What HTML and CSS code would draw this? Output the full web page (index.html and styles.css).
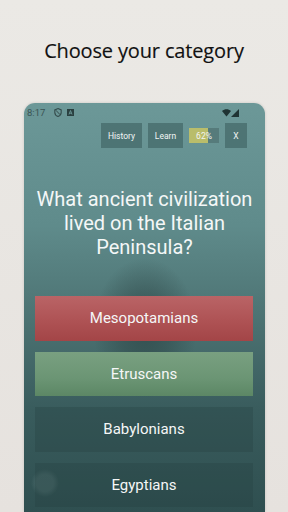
FILE: index.html
```html
<!DOCTYPE html>
<html>
<head>
<meta charset="utf-8">
<link rel="stylesheet" href="styles.css">
</head>
<body>
<div class="page">
  <header class="header">
    <h1 class="title">Choose your category</h1>
  </header>
  <main class="phone">
    <div class="status">
      <div class="status-left">
        <span class="time">8:17</span>
        <svg class="ico" width="8" height="9" viewBox="0 0 8 9"><path d="M4 0.6 L7.2 1.9 V4.4 C7.2 6.3 5.7 7.7 4 8.4 C2.3 7.7 0.8 6.3 0.8 4.4 V1.9 Z" fill="none" stroke="#344c4c" stroke-width="1.1"/><path d="M1.8 2.2 L6.2 6.8" stroke="#344c4c" stroke-width="1"/></svg>
        <svg class="ico" width="7" height="7" viewBox="0 0 7 7"><rect x="0" y="0" width="7" height="7" fill="#2a4040"/><path d="M2 5.5 L3.5 1.5 L5 5.5 M2.5 4.2 H4.5" stroke="#6c9898" stroke-width="0.9" fill="none"/></svg>
      </div>
      <div class="status-right">
        <svg width="9" height="8" viewBox="0 0 9 8"><path d="M0 2 C2.5 -0.5 6.5 -0.5 9 2 L4.5 7.5 Z" fill="#1f3333"/></svg>
        <svg width="8" height="8" viewBox="0 0 8 8"><path d="M8 0 V8 H0 Z" fill="#1f3333"/></svg>
      </div>
    </div>
    <div class="toolbar">
      <div class="tbtn w-history">History</div>
      <div class="tbtn w-learn">Learn</div>
      <div class="progress">
        <div class="progress-fill" style="width:62%"></div>
        <span class="progress-label">62%</span>
      </div>
      <div class="tbtn w-x">X</div>
    </div>
    <div class="question">What ancient civilization lived on the Italian Peninsula?</div>
    <div class="answers">
      <div class="answer wrong">Mesopotamians</div>
      <div class="answer right">Etruscans</div>
      <div class="answer">Babylonians</div>
      <div class="answer">Egyptians</div>
    </div>
  </main>
</div>
</body>
</html>
```
FILE: styles.css
```css
* { box-sizing: border-box; }
html, body { margin: 0; padding: 0; }
body {
  width: 288px;
  height: 512px;
  overflow: hidden;
  background: linear-gradient(180deg, #ebe9e5 0%, #e6e2de 100%);
  font-family: Roboto, "Liberation Sans", sans-serif;
}
.page {
  display: flex;
  flex-direction: column;
  height: 512px;
}
.header {
  height: 103px;
  display: flex;
  justify-content: center;
  padding-top: 37px;
}
.title {
  margin: 0;
  font-family: "Open Sans", "Liberation Sans", sans-serif;
  font-weight: 400;
  font-size: 20px;
  line-height: 28px;
  color: #111111;
  letter-spacing: -0.15px;
  -webkit-text-stroke: 0.15px #111111;
}
.phone {
  margin: 0 23px 0 24px;
  flex: 1;
  border-radius: 11px 11px 0 0;
  display: flex;
  flex-direction: column;
  background:
    radial-gradient(circle 14px at 21px 380px, rgba(120,150,150,0.25), rgba(120,150,150,0.25) 60%, transparent 100%),
    radial-gradient(ellipse 52px 70px at 121px 225px, rgba(45,70,70,0.75), rgba(45,70,70,0.45) 50%, transparent 100%),
    linear-gradient(180deg, #6c9898 0%, #5f8b8b 30%, #4a7070 55%, #395c5d 75%, #2f4f50 100%);
  box-shadow: 0 0 3px rgba(0,0,0,0.15);
  overflow: hidden;
}
.status {
  height: 20px;
  display: flex;
  justify-content: space-between;
  align-items: center;
  padding: 0 26px 1px 3px;
}
.status-left, .status-right {
  display: flex;
  align-items: center;
  gap: 5px;
}
.status-right { gap: 0; }
.time {
  font-size: 9.5px;
  color: #3a5454;
  margin-right: 4px;
}
.toolbar {
  height: 25px;
  display: flex;
  justify-content: flex-end;
  align-items: center;
  gap: 6px;
  padding-right: 18px;
}
.tbtn {
  height: 25px;
  background: rgba(60,95,95,0.6);
  color: #f2f5f5;
  font-size: 8.5px;
  display: flex;
  align-items: center;
  justify-content: center;
}
.w-history { width: 41px; }
.w-learn { width: 35px; }
.w-x { width: 22px; }
.progress {
  position: relative;
  width: 30px;
  height: 15px;
  background: #567b7b;
  display: flex;
  align-items: center;
  justify-content: center;
}
.progress-fill {
  position: absolute;
  left: 0;
  top: 0;
  bottom: 0;
  background: #b9bd6b;
}
.progress-label {
  position: relative;
  color: #f4f4f0;
  font-size: 8.5px;
}
.question {
  margin-top: 39px;
  padding: 0 8px;
  text-align: center;
  color: #f4f7f7;
  font-size: 20px;
  line-height: 24px;
}
.answers {
  margin-top: 37px;
  padding: 0 12px 0 11px;
  display: flex;
  flex-direction: column;
  gap: 11px;
}
.answer {
  height: 44.5px;
  display: flex;
  align-items: center;
  justify-content: center;
  color: #f5f7f7;
  font-size: 15px;
  background: rgba(35,62,62,0.3);
}
.answer.wrong {
  background: linear-gradient(180deg, #ba6466 0%, #ad5153 60%, #a34547 100%);
}
.answer.right {
  background: linear-gradient(180deg, #79a081 0%, #6b9574 60%, #5c8765 100%);
}
```
